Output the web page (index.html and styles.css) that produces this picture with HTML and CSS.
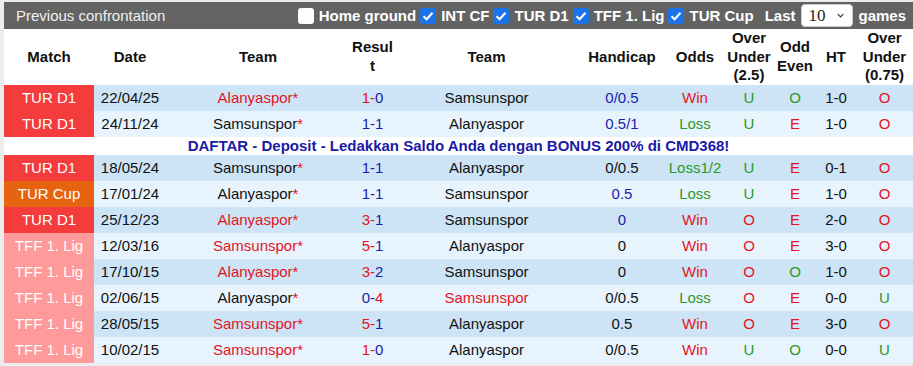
FILE: index.html
```html
<!DOCTYPE html>
<html>
<head>
<meta charset="utf-8">
<link rel="stylesheet" href="styles.css">
</head>
<body>
<div class="wrap">
  <div class="bar">
    <div class="title">Previous confrontation</div>
    <div class="filters">
      <span class="cb"></span><span class="lbl">Home ground</span>
      <span class="cb on"><svg viewBox="0 0 16 16" width="16" height="16"><path d="M3.5 8.2 L6.6 11.2 L12.5 4.8" fill="none" stroke="#fff" stroke-width="2"/></svg></span><span class="lbl">INT CF</span>
      <span class="cb on"><svg viewBox="0 0 16 16" width="16" height="16"><path d="M3.5 8.2 L6.6 11.2 L12.5 4.8" fill="none" stroke="#fff" stroke-width="2"/></svg></span><span class="lbl">TUR D1</span>
      <span class="cb on"><svg viewBox="0 0 16 16" width="16" height="16"><path d="M3.5 8.2 L6.6 11.2 L12.5 4.8" fill="none" stroke="#fff" stroke-width="2"/></svg></span><span class="lbl">TFF 1. Lig</span>
      <span class="cb on"><svg viewBox="0 0 16 16" width="16" height="16"><path d="M3.5 8.2 L6.6 11.2 L12.5 4.8" fill="none" stroke="#fff" stroke-width="2"/></svg></span><span class="lbl">TUR Cup</span>
      <span class="lbl last">Last</span>
      <span class="sel"><span class="selv">10</span><svg viewBox="0 0 10 10" width="9" height="9"><path d="M2 3.5 L5 6.5 L8 3.5" fill="none" stroke="#333" stroke-width="1.3"/></svg></span>
      <span class="lbl">games</span>
    </div>
  </div>
  <table class="tbl">
    <colgroup>
      <col class="c-match"><col class="c-date"><col class="c-team"><col class="c-res"><col class="c-team2"><col class="c-hc"><col class="c-odds"><col class="c-ou"><col class="c-oe"><col class="c-ht"><col class="c-ou2">
    </colgroup>
    <thead>
      <tr class="hd">
        <th>Match</th><th>Date</th><th>Team</th><th>Resul<br>t</th><th>Team</th><th>Handicap</th><th>Odds</th><th>Over<br>Under<br>(2.5)</th><th>Odd<br>Even</th><th>HT</th><th>Over<br>Under<br>(0.75)</th>
      </tr>
    </thead>
    <tbody>
      <tr class="r1">
        <td class="m d1">TUR D1</td><td>22/04/25</td><td class="red">Alanyaspor*</td><td><span class="red">1-</span><span class="blue">0</span></td><td>Samsunspor</td><td class="blue">0/0.5</td><td class="red">Win</td><td class="green">U</td><td class="green">O</td><td>1-0</td><td class="red">O</td>
      </tr>
      <tr class="r2">
        <td class="m d1">TUR D1</td><td>24/11/24</td><td>Samsunspor<span class="red">*</span></td><td class="blue">1-1</td><td>Alanyaspor</td><td class="blue">0.5/1</td><td class="green">Loss</td><td class="green">U</td><td class="red">E</td><td>1-0</td><td class="red">O</td>
      </tr>
      <tr class="ad">
        <td colspan="11">DAFTAR - Deposit - Ledakkan Saldo Anda dengan BONUS 200% di CMD368!</td>
      </tr>
      <tr class="r1">
        <td class="m d1">TUR D1</td><td>18/05/24</td><td>Samsunspor<span class="red">*</span></td><td class="blue">1-1</td><td>Alanyaspor</td><td>0/0.5</td><td class="green">Loss1/2</td><td class="green">U</td><td class="red">E</td><td>0-1</td><td class="red">O</td>
      </tr>
      <tr class="r2">
        <td class="m cup">TUR Cup</td><td>17/01/24</td><td>Alanyaspor<span class="red">*</span></td><td class="blue">1-1</td><td>Samsunspor</td><td class="blue">0.5</td><td class="green">Loss</td><td class="green">U</td><td class="red">E</td><td>1-0</td><td class="red">O</td>
      </tr>
      <tr class="r1">
        <td class="m d1">TUR D1</td><td>25/12/23</td><td class="red">Alanyaspor*</td><td><span class="red">3-</span><span class="blue">1</span></td><td>Samsunspor</td><td class="blue">0</td><td class="red">Win</td><td class="red">O</td><td class="red">E</td><td>2-0</td><td class="red">O</td>
      </tr>
      <tr class="r2">
        <td class="m tff">TFF 1. Lig</td><td>12/03/16</td><td class="red">Samsunspor*</td><td><span class="red">5-</span><span class="blue">1</span></td><td>Alanyaspor</td><td>0</td><td class="red">Win</td><td class="red">O</td><td class="red">E</td><td>3-0</td><td class="red">O</td>
      </tr>
      <tr class="r1">
        <td class="m tff">TFF 1. Lig</td><td>17/10/15</td><td class="red">Alanyaspor*</td><td><span class="red">3-</span><span class="blue">2</span></td><td>Samsunspor</td><td>0</td><td class="red">Win</td><td class="red">O</td><td class="green">O</td><td>1-0</td><td class="red">O</td>
      </tr>
      <tr class="r2">
        <td class="m tff">TFF 1. Lig</td><td>02/06/15</td><td>Alanyaspor<span class="red">*</span></td><td><span class="blue">0-</span><span class="red">4</span></td><td class="red">Samsunspor</td><td>0/0.5</td><td class="green">Loss</td><td class="red">O</td><td class="red">E</td><td>0-0</td><td class="green">U</td>
      </tr>
      <tr class="r1">
        <td class="m tff">TFF 1. Lig</td><td>28/05/15</td><td class="red">Samsunspor*</td><td><span class="red">5-</span><span class="blue">1</span></td><td>Alanyaspor</td><td>0.5</td><td class="red">Win</td><td class="red">O</td><td class="red">E</td><td>3-0</td><td class="red">O</td>
      </tr>
      <tr class="r2">
        <td class="m tff">TFF 1. Lig</td><td>10/02/15</td><td class="red">Samsunspor*</td><td><span class="red">1-</span><span class="blue">0</span></td><td>Alanyaspor</td><td>0/0.5</td><td class="red">Win</td><td class="green">U</td><td class="green">O</td><td>0-0</td><td class="green">U</td>
      </tr>
    </tbody>
  </table>
</div>
</body>
</html>
```

FILE: styles.css
```css
html, body {
  margin: 0;
  padding: 0;
  background: #ececec;
}
body {
  padding: 2px 0 0 4px;
  font-family: "Liberation Sans", Arial, sans-serif;
  font-size: 15px;
  color: #111;
}
.wrap {
  width: 909px;
  background: #fff;
}
.bar {
  height: 27px;
  background: #636363;
  display: flex;
  align-items: center;
  justify-content: space-between;
  color: #fff;
}
.title {
  padding-left: 12px;
  color: #f0f0f0;
  font-size: 15px;
}
.filters {
  display: flex;
  align-items: center;
  padding-right: 7px;
}
.cb {
  width: 16px;
  height: 16px;
  border-radius: 3px;
  background: #fff;
  margin-right: 5px;
  margin-left: 4px;
  display: flex;
}
.cb.on {
  background: #1a73e8;
}
.lbl {
  font-weight: bold;
  font-size: 15px;
  color: #fff;
}
.last {
  margin-left: 11px;
}
.sel {
  display: flex;
  align-items: center;
  justify-content: space-between;
  width: 52px;
  height: 23px;
  box-sizing: border-box;
  background: #fff;
  border: 1px solid #ccc;
  border-radius: 4px;
  margin: 0 5px 0 6px;
  padding: 0 7px 0 6px;
}
.selv {
  font-family: "Liberation Serif", "Times New Roman", serif;
  font-size: 17px;
  color: #222;
}
.tbl {
  width: 909px;
  border-collapse: collapse;
  table-layout: fixed;
}
.c-match { width: 90px; }
.c-date { width: 72px; }
.c-team { width: 184px; }
.c-res { width: 45px; }
.c-team2 { width: 183px; }
.c-hc { width: 88px; }
.c-odds { width: 58px; }
.c-ou { width: 50px; }
.c-oe { width: 42px; }
.c-ht { width: 40px; }
.c-ou2 { width: 57px; }
.tbl th, .tbl td {
  padding: 0;
  text-align: center;
  vertical-align: middle;
  white-space: nowrap;
}
.hd th {
  height: 54px;
  font-weight: bold;
  font-size: 15px;
  line-height: 18.5px;
  color: #111;
  background: #fff;
}
.tbl td {
  height: 26px;
  font-size: 15px;
}
.r1 td { background: #cce4f6; }
.r2 td { background: #e8f4fd; }
.tbl td.m { color: #fff; }
.tbl td.d1 { background: #f53c3c; }
.tbl td.cup { background: #e6640f; }
.tbl td.tff { background: #ff9a9a; }
.ad td {
  height: 18px;
  line-height: 18px;
  background: #fff;
  color: #1a1aa6;
  font-weight: bold;
  font-size: 15px;
}
.red { color: #e4141e; }
.blue { color: #1c1caa; }
.green { color: #2a9a2a; }
```
